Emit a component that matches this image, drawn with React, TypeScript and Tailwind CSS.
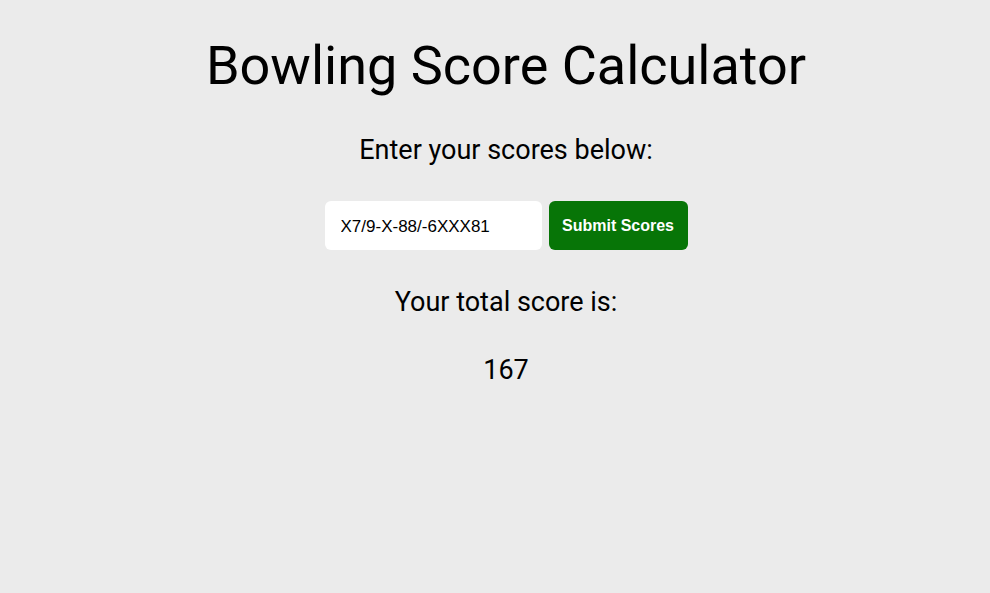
import React, { useState } from 'react';

const App = () => {
  const [scores, setScores] = useState('X7/9-X-88/-6XXX81');

  return (
    <div className="min-h-[593px] bg-[#ebebeb] text-black flex flex-col items-center pl-[22px] font-['Roboto',sans-serif]">
      <h1 className="mt-[34px] text-[54px] leading-[64px] font-normal">Bowling Score Calculator</h1>
      <h2 className="mt-[36px] text-[27px] leading-[32px]">Enter your scores below:</h2>

      <div className="mt-[35px] flex items-center gap-[7px]">
        <input
          value={scores}
          onChange={(e) => setScores(e.target.value)}
          className="w-[217px] h-[49px] rounded-[6px] bg-white px-4 pt-[2px] text-[17px] font-['Liberation_Sans',Arial,sans-serif] outline-none"
        />
        <button className="w-[139px] h-[49px] rounded-[6px] bg-[#077507] text-white text-[16px] font-bold font-['Liberation_Sans',Arial,sans-serif]">
          Submit Scores
        </button>
      </div>

      <h2 className="mt-[36px] text-[27px] leading-[32px]">Your total score is:</h2>
      <p className="mt-[36px] text-[27px] leading-[32px]">167</p>
    </div>
  );
};

export default App;
